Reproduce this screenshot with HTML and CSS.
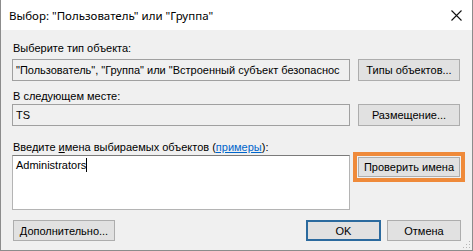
FILE: index.html
```html
<!DOCTYPE html>
<html lang="ru">
<head>
<meta charset="utf-8">
<title>Выбор</title>
<link rel="stylesheet" href="styles.css">
</head>
<body>
<div class="window">
  <div class="titlebar">
    <span class="title">Выбор: "Пользователь" или "Группа"</span>
    <span class="close">
      <svg width="11" height="11" viewBox="0 0 11 11"><path d="M0.5 0.5 L10.5 10.5 M10.5 0.5 L0.5 10.5" stroke="#111" stroke-width="1.1" fill="none"/></svg>
    </span>
  </div>
  <div class="content">
    <div class="label l1">Выберите тип объекта:</div>
    <div class="row">
      <div class="field readonly"><span class="clip">"Пользователь", "Группа" или "Встроенный субъект безопаснос</span></div>
      <div class="btn">Типы объектов...</div>
    </div>
    <div class="label l2">В следующем месте:</div>
    <div class="row">
      <div class="field readonly">TS</div>
      <div class="btn">Размещение...</div>
    </div>
    <div class="label l3">Введите <u>и</u>мена выбираемых объектов (<a class="link" href="#">примеры</a>):</div>
    <div class="row top">
      <div class="area">Administrators<span class="caret"></span></div>
      <div class="btn check">Проверить имена</div>
    </div>
    <div class="footer">
      <div class="btn wide">Дополнительно...</div>
      <div class="spacer"></div>
      <div class="btn ok">OK</div>
      <div class="btn cancel">Отмена</div>
    </div>
  </div>
  <svg class="grip" width="9" height="9" viewBox="0 0 9 9">
    <rect x="7" y="1" width="1" height="1" fill="#b5b5b5"/>
    <rect x="4" y="4" width="1" height="1" fill="#b5b5b5"/>
    <rect x="7" y="4" width="1" height="1" fill="#b5b5b5"/>
    <rect x="1" y="7" width="1" height="1" fill="#b5b5b5"/>
    <rect x="4" y="7" width="1" height="1" fill="#b5b5b5"/>
    <rect x="7" y="7" width="1" height="1" fill="#b5b5b5"/>
  </svg>
</div>
</body>
</html>
```
FILE: styles.css
```css
html, body {
  margin: 0;
  padding: 0;
  background: #f0f0f0;
}
.window {
  position: relative;
  width: 473px;
  height: 251px;
  box-sizing: border-box;
  border: 1px solid #8c8c8c;
  border-top: none;
  background: #f0f0f0;
  font-family: "Liberation Sans", Arial, sans-serif;
  font-size: 11px;
  color: #000;
  overflow: hidden;
}
.titlebar {
  height: 30px;
  background: #fff;
  display: flex;
  align-items: center;
  padding-left: 8px;
  padding-right: 10px;
}
.title {
  font-family: "Noto Sans", "Open Sans", sans-serif;
  font-size: 11.5px;
  flex: 1;
}
.close {
  display: flex;
  width: 11px;
  height: 11px;
}
.content {
  padding: 11px 11px 0 11px;
}
.label {
  height: 15px;
  line-height: 15px;
  padding-left: 1px;
  white-space: nowrap;
}
.l1 { margin-bottom: 3px; }
.l2 { margin-top: 8px; margin-bottom: 0px; }
.l3 { margin-top: 14px; margin-bottom: 0px; }
.row {
  display: flex;
  gap: 8px;
  align-items: center;
}
.row.top {
  align-items: flex-start;
}
.field {
  width: 338px;
  flex: none;
  height: 22px;
  box-sizing: border-box;
  border: 1px solid #a0a0a0;
  line-height: 20px;
  padding-left: 3px;
  overflow: hidden;
  white-space: nowrap;
}
.readonly {
  background: #f0f0f0;
}
.clip {
  white-space: nowrap;
}
.btn {
  box-sizing: border-box;
  flex: none;
  height: 22px;
  width: 102px;
  background: #e1e1e1;
  border: 1px solid #adadad;
  display: flex;
  align-items: center;
  justify-content: center;
  white-space: nowrap;
}
.area {
  width: 338px;
  flex: none;
  height: 55px;
  box-sizing: border-box;
  background: #fff;
  border: 1px solid #b4b4b4;
  border-top-color: #7a7a7a;
  padding: 2px 3px;
  line-height: 14px;
}
.caret {
  display: inline-block;
  width: 1px;
  height: 14px;
  background: #000;
  vertical-align: -3px;
}
.check {
  margin-top: 2px;
  height: 20px;
  box-shadow: 0 0 0 1px #f0f0f0, 0 0 0 5px #ef8a3a;
}
.link {
  color: #0066cc;
  text-decoration: underline;
}
.footer {
  display: flex;
  align-items: center;
  margin-top: 10px;
  gap: 6px;
}
.spacer { flex: 1; }
.btn.wide {
  margin-left: 1px;
  height: 21px;
}
.btn.ok {
  width: 75px;
  height: 21px;
  border: 2px solid #2b6a9e;
}
.btn.cancel {
  width: 74px;
  height: 21px;
}
.grip {
  position: absolute;
  right: 1px;
  bottom: 1px;
}
```
